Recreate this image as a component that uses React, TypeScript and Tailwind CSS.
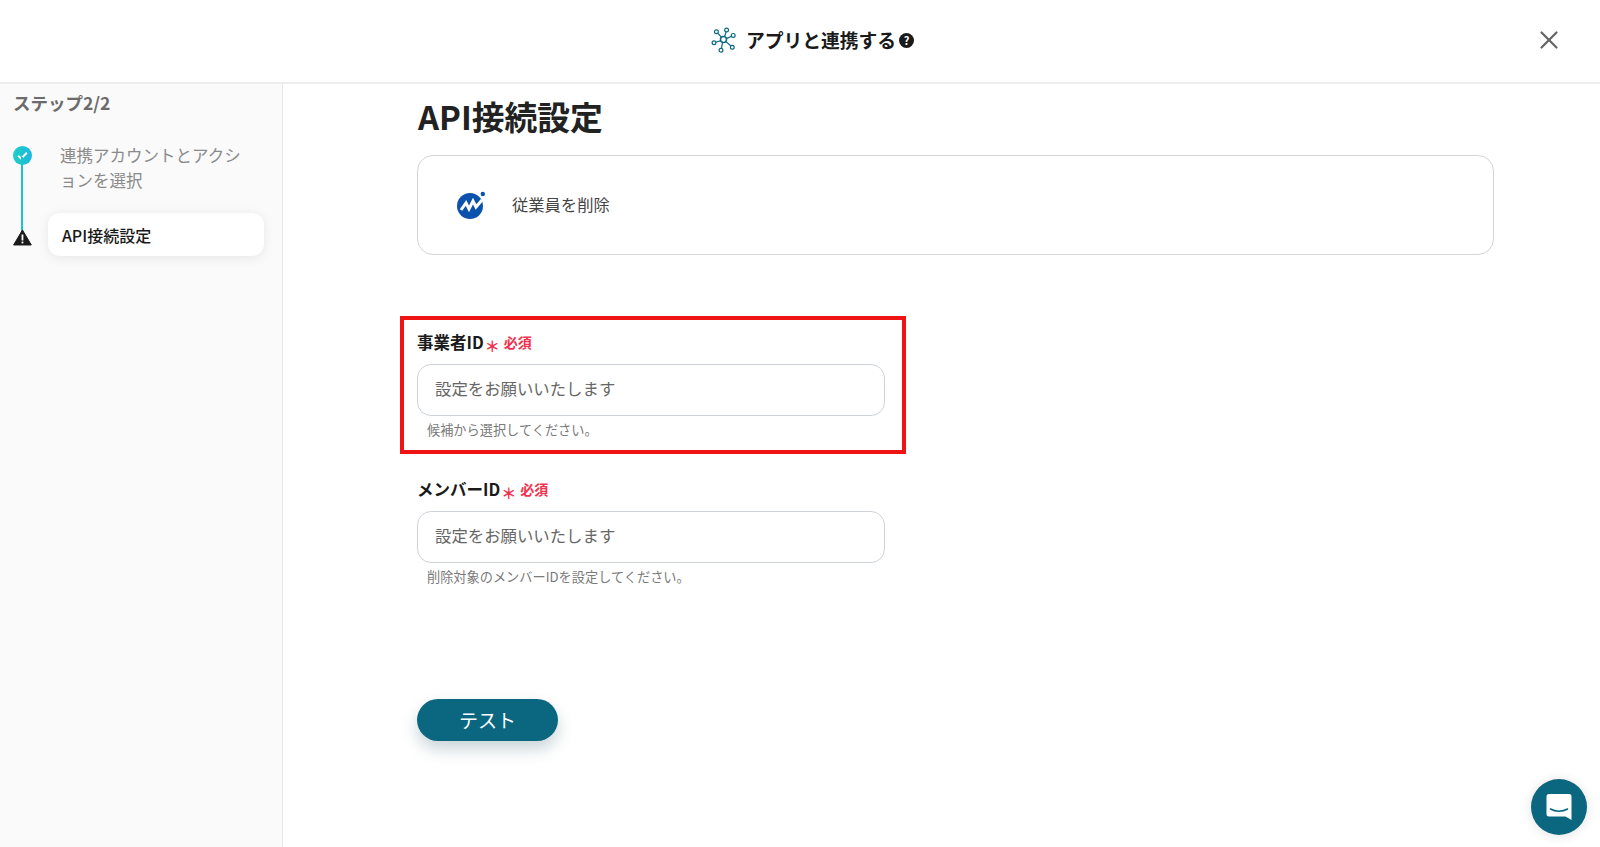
import React from 'react';
import { X } from 'lucide-react';

const FONT = '"Noto Sans CJK JP", "Noto Sans", sans-serif';

const HubIcon = () => (
    <svg width="26" height="26" viewBox="0 0 26 26" fill="none" stroke="#0b6a82" strokeWidth="1.2">
        <circle cx="12.500" cy="12.500" r="3" strokeWidth="1.500" />
        <path d="M13.500 9.700l1.600-5M15.300 11.600l5.200-2.400M14.800 14.600l5 4.200M11.600 15.300l-1.200 6M10 13.600l-5.200 1.600M10.600 10.400L6.600 6" />
        <circle cx="15.600" cy="3" r="1.900" />
        <circle cx="22.200" cy="8.400" r="1.900" />
        <circle cx="21.300" cy="20.200" r="1.900" />
        <circle cx="10" cy="23.200" r="1.900" />
        <circle cx="3" cy="15.800" r="1.900" />
        <circle cx="5.400" cy="4.800" r="1.900" />
    </svg>
);

const Field = ({ label, help, boxed }: { label: string; help: string; boxed?: boolean }) => (
    <div className="relative w-[468px]">
        {boxed && (
            <div className="absolute left-[-17px] top-[-17px] w-[506px] h-[138px] border-[4px] border-[#ee1414]" />
        )}
        <div className="flex items-center h-[18px] text-[16.5px] font-bold text-[#1a1a1a]">
            {label}
            <span className="ml-[1px] mt-[6px] text-[15px] leading-none font-bold text-[#f0314f]">＊</span>
            <span className="ml-[4px] text-[14px] font-bold text-[#f0314f]">必須</span>
        </div>
        <input
            readOnly
            placeholder="設定をお願いいたします"
            className="block mt-[13px] w-full h-[52px] px-[17px] pb-[5px] border border-[#cdd3d8] rounded-[14px] text-[16.4px] bg-white outline-none placeholder:text-[#666]"
        />
        <p className="mt-[6px] ml-[10px] text-[13.2px] leading-[16px] text-[#7a7a7a]">{help}</p>
    </div>
);

export default function App() {
    return (
        <div className="h-[847px] flex flex-col bg-white overflow-hidden" style={{ fontFamily: FONT }}>
            {/* Header */}
            <header className="relative h-[84px] shrink-0 flex items-center justify-center border-b-2 border-[#eeeeee]">
                <div className="flex items-center ml-[25px] mt-[-2px]">
                    <HubIcon />
                    <span className="ml-[9px] text-[18.8px] font-bold text-[#1a1a1a]">アプリと連携する</span>
                    <span className="ml-[3px] w-[15px] h-[15px] rounded-full bg-[#1a1a1a] text-white text-[11px] font-bold flex items-center justify-center">?</span>
                </div>
                <X size={30} strokeWidth={1.8} className="absolute right-[36px] top-[25px] text-[#666]" />
            </header>

            <div className="flex flex-1 min-h-0">
                {/* Sidebar */}
                <aside className="w-[283px] shrink-0 bg-[#fafafa] border-r border-[#e8e8e8] pl-[13px] pr-[18px]">
                    <div className="mt-[6px] text-[17.5px] font-bold text-[#6b6b6b]">ステップ2/2</div>
                    <div className="relative mt-[25px]">
                        <div className="absolute left-[8px] top-[16px] w-[2px] h-[80px] bg-[#1bc5d0]" />
                        <div className="flex">
                            <div className="w-[19px] h-[19px] mt-[5px] rounded-full bg-gradient-to-r from-[#1fcfc4] to-[#1fb6e0] flex items-center justify-center">
                                <svg width="13" height="13" viewBox="0 0 12 12" fill="none" stroke="#fff" strokeWidth="1.8">
                                    <path d="M2 6.200l2.700 2.700L10 3.500" />
                                </svg>
                            </div>
                            <p className="ml-[28px] mt-[2px] w-[183px] text-[16.5px] leading-[24.5px] text-[#8a8a8a]">連携アカウントとアクションを選択</p>
                        </div>
                        <div className="flex items-center mt-[21px]">
                            <svg width="19" height="17" viewBox="0 0 19 17" className="relative mt-[6px]">
                                <path d="M9.500 1L18.400 16H.6z" fill="#1a1a1a" stroke="#1a1a1a" strokeLinejoin="round" />
                                <rect x="8.600" y="5.500" width="1.800" height="6" fill="#fff" />
                                <rect x="8.600" y="12.600" width="1.800" height="1.800" fill="#fff" />
                            </svg>
                            <div className="ml-[16px] w-[217px] h-[43px] flex items-center pl-[14px] bg-white rounded-[12px] shadow-[0_2px_12px_rgba(0,0,0,0.08)] text-[16px] font-medium text-[#1a1a1a]">
                                API接続設定
                            </div>
                        </div>
                    </div>
                </aside>

                {/* Main */}
                <main className="relative flex-1 pl-[134px]">
                    <h1 className="mt-[8px] ml-[1px] text-[32.8px] leading-[48px] font-bold text-[#222]">API接続設定</h1>
                    <div className="mt-[15px] w-[1077px] h-[100px] flex items-center pl-[39px] pb-[1px] border border-[#d4d4d4] rounded-[16px]">
                        <svg width="28" height="28" viewBox="0 0 28 28">
                            <circle cx="13" cy="15" r="13" fill="#0b52ad" />
                            <path d="M4 19l5-7 3 6 4-8 3 6 6-7" fill="none" stroke="#fff" strokeWidth="3" />
                            <circle cx="25.800" cy="3" r="2.200" fill="#0b52ad" />
                        </svg>
                        <span className="ml-[27px] text-[16.3px] text-[#444]">従業員を削除</span>
                    </div>
                    <div className="mt-[78px]">
                        <Field label="事業者ID" help="候補から選択してください。" boxed />
                    </div>
                    <div className="mt-[42px]">
                        <Field label="メンバーID" help="削除対象のメンバーIDを設定してください。" />
                    </div>
                    <button className="block mt-[114px] w-[141px] h-[42px] rounded-full bg-[#0b6680] text-white text-[19px] shadow-[0_8px_16px_rgba(11,60,80,0.22)]">
                        テスト
                    </button>

                    {/* Chat launcher */}
                    <div className="absolute right-[13px] bottom-[12px] w-[56px] h-[56px] rounded-full bg-[#0b6680] flex items-center justify-center shadow-[0_1px_12px_rgba(0,0,0,0.12)]">
                        <svg width="26" height="28" viewBox="0 0 26 28">
                            <path d="M3 1h20a2.500 2.500 0 012.500 2.500V27l-6-3.500H3A2.500 2.500 0 01.5 21V3.500A2.500 2.500 0 013 1z" fill="#fff" />
                            <path d="M4.500 16c5 3 12 3 17 0" fill="none" stroke="#0b6680" strokeWidth="1.500" strokeLinecap="round" />
                        </svg>
                    </div>
                </main>
            </div>
        </div>
    );
}
